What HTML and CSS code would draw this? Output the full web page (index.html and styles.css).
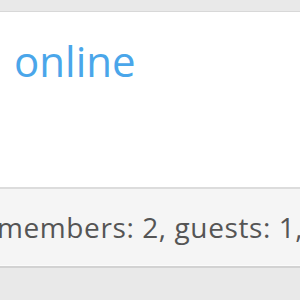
FILE: index.html
```html
<!DOCTYPE html>
<html>
<head>
<title>Who's online</title>
<link rel="stylesheet" href="styles.css">
</head>
<body>
<div class="page">
  <div class="block">
    <div class="block-head">
      <h3 class="block-title">online</h3>
    </div>
    <div class="block-foot">
      <span class="stats">members: 2, guests: 1, robots: 0</span>
    </div>
  </div>
</div>
</body>
</html>
```

FILE: styles.css
```css
body {
    margin: 0;
    padding: 0;
    background: #e9e9e9;
    font-family: "Open Sans", "Noto Sans", sans-serif;
}

.page {
    padding-top: 11px;
    overflow: hidden;
}

.block {
    background: #fff;
    border-top: 1px solid #d8d8d8;
    border-bottom: 2px solid #d2d2d2;
}

.block-head {
    height: 175px;
    padding-left: 14px;
    border-bottom: 2px solid #dcdcdc;
}

.block-title {
    margin: 0;
    padding-top: 28px;
    font-size: 42px;
    font-weight: normal;
    line-height: 1;
    color: #4aa6ea;
}

.block-foot {
    height: 76px;
    background: #f5f5f5;
    border-bottom: 1px solid #fbfbfb;
    display: flex;
    align-items: center;
    white-space: nowrap;
}

.stats {
    margin-left: -3px;
    font-size: 28px;
    letter-spacing: 0.6px;
    color: #555;
}
```
